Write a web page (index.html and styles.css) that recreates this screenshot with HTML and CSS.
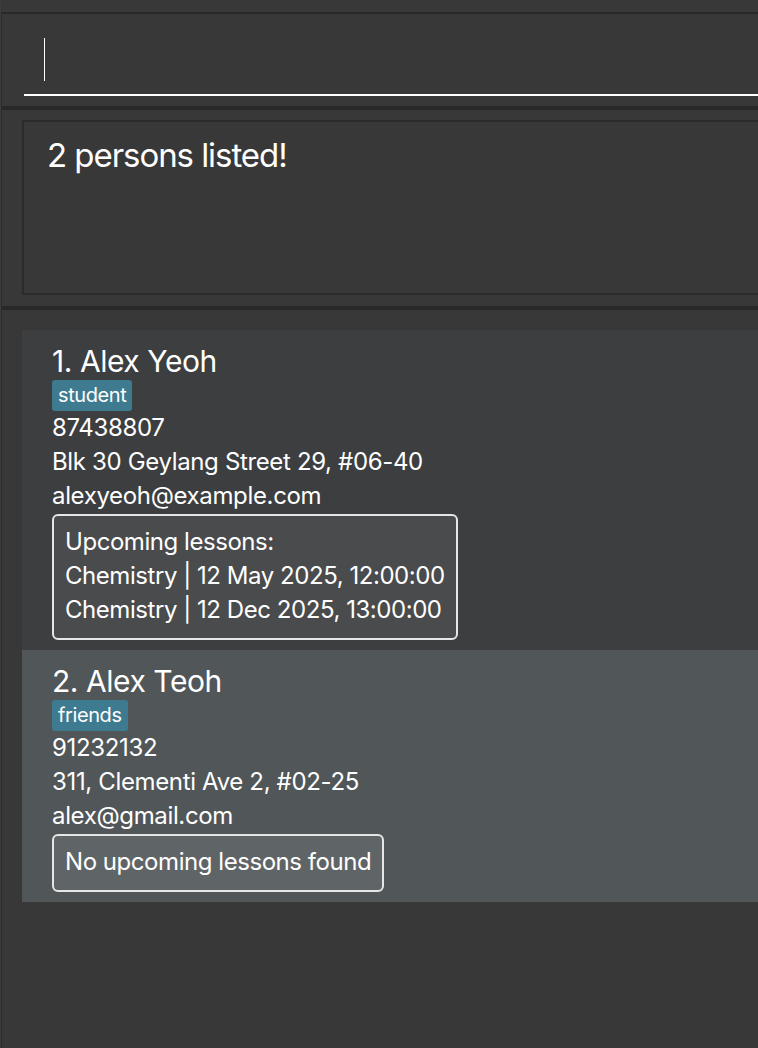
FILE: index.html
```html
<!DOCTYPE html>
<html lang="en">
<head>
<meta charset="utf-8">
<title>Address Book</title>
<link rel="stylesheet" href="styles.css">
</head>
<body>
<div class="app">
  <div class="topbar"></div>
  <div class="frame">
    <div class="command-pane">
      <div class="command-input"><span class="caret"></span></div>
    </div>
    <div class="divider"></div>
    <div class="result-pane">
      <div class="result-box">2 persons listed!</div>
    </div>
    <div class="divider"></div>
    <div class="list-pane">
      <div class="card card-odd">
        <div class="name">1. Alex Yeoh</div>
        <div class="tags"><span class="tag">student</span></div>
        <div class="field">87438807</div>
        <div class="field">Blk 30 Geylang Street 29, #06-40</div>
        <div class="field">alexyeoh@example.com</div>
        <div class="lessons">
          <div>Upcoming lessons:</div>
          <div>Chemistry | 12 May 2025, 12:00:00</div>
          <div>Chemistry | 12 Dec 2025, 13:00:00</div>
        </div>
      </div>
      <div class="card card-even">
        <div class="name">2. Alex Teoh</div>
        <div class="tags"><span class="tag">friends</span></div>
        <div class="field">91232132</div>
        <div class="field">311, Clementi Ave 2, #02-25</div>
        <div class="field">alex@gmail.com</div>
        <div class="lessons">
          <div>No upcoming lessons found</div>
        </div>
      </div>
    </div>
  </div>
</div>
</body>
</html>
```
FILE: styles.css
```css
* { box-sizing: border-box; }
html, body {
  margin: 0;
  padding: 0;
  background: #383838;
  overflow: hidden;
  height: 100%;
}
body {
  font-family: Inter, "Noto Sans", sans-serif;
  color: #ffffff;
}
.app {
  height: 100%;
  display: flex;
  flex-direction: column;
  border-left: 1px solid #3c3c3c;
}
.topbar {
  height: 12px;
  flex: none;
}
.frame {
  flex: 1;
  border-top: 2px solid #292929;
  border-left: 1px solid #2b2b2b;
}
.command-pane {
  height: 92px;
  padding: 0 0 0 22px;
}
.command-input {
  height: 82px;
  border-bottom: 2px solid #ffffff;
  padding: 24px 0 0 20px;
}
.caret {
  display: block;
  width: 1px;
  height: 43px;
  background: #ffffff;
}
.divider {
  height: 4px;
  background: #292929;
}
.result-pane {
  padding: 10px 0 11px 20px;
}
.result-box {
  height: 175px;
  border: 2px solid #2b2b2b;
  border-right: none;
  padding: 13px 0 0 23px;
  font-size: 33px;
  line-height: 40px;
  letter-spacing: -1.05px;
}
.list-pane {
  padding: 20px 0 0 20px;
}
.card {
  padding: 12px 0 10px 30px;
}
.card-odd { background: #3c3e40; }
.card-even { background: #515658; }
.name {
  font-size: 30px;
  line-height: 38px;
  letter-spacing: -0.45px;
  color: #ffffff;
}
.tags {
  display: flex;
  height: 31px;
}
.tag {
  background: #3e7b91;
  color: #ffffff;
  font-size: 20px;
  line-height: 31px;
  letter-spacing: -0.4px;
  padding: 0 6px;
  border-radius: 3px;
}
.field {
  font-size: 24px;
  line-height: 34px;
  letter-spacing: -0.35px;
  color: #ffffff;
}
.lessons {
  display: inline-block;
  margin-top: 1px;
  border: 2px solid #e6e6e6;
  border-radius: 6px;
  padding: 9px 11px 11px 11px;
  font-size: 24px;
  line-height: 34px;
  letter-spacing: -0.45px;
  color: #ffffff;
}
.card-odd .lessons { background: #4a4b4d; }
.card-even .lessons { background: #5f6467; }
```
